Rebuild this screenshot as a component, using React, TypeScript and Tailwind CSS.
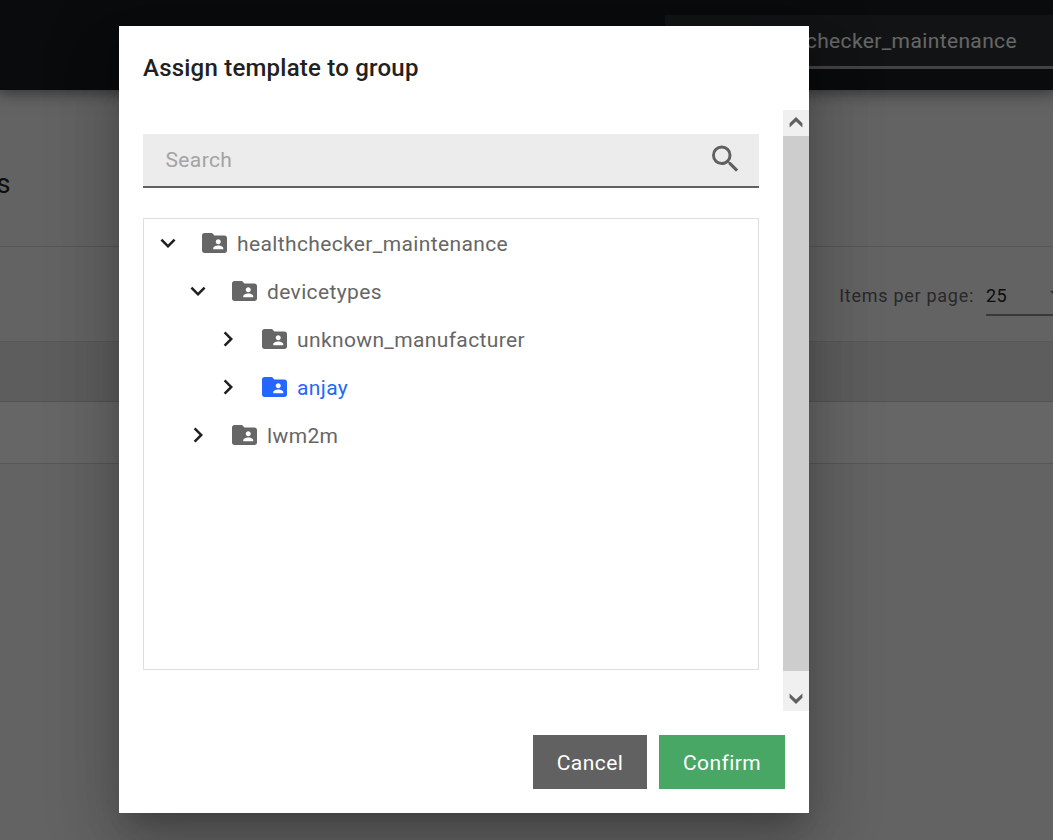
import { MdChevronRight, MdExpandMore, MdFolderShared, MdSearch } from "react-icons/md";

type Node = { label: string; indent: string; open: boolean; selected?: boolean };

const nodes: Node[] = [
  { label: "healthchecker_maintenance", indent: "pl-[9px]", open: true },
  { label: "devicetypes", indent: "pl-[39px]", open: true },
  { label: "unknown_manufacturer", indent: "pl-[69px]", open: false },
  { label: "anjay", indent: "pl-[69px]", open: false, selected: true },
  { label: "lwm2m", indent: "pl-[39px]", open: false },
];

function TreeRow({ node }: { node: Node }) {
  const Arrow = node.open ? MdExpandMore : MdChevronRight;
  return (
    <li className={`flex h-12 items-center ${node.indent} ${node.selected ? "text-[#2566ff]" : "text-[#666666]"}`}>
      <Arrow className="size-[30px] shrink-0 text-[#1f1f1f]" />
      <MdFolderShared className="ml-4 size-[30px] shrink-0 translate-x-[0.5px]" />
      <span className="ml-2 pt-px text-[21px] leading-6 tracking-[0.37px]">{node.label}</span>
    </li>
  );
}

function Page() {
  return (
    <div className="flex h-full flex-col bg-[#f7f7f7]">
      <header className="z-10 flex h-[90px] shrink-0 justify-end bg-[#191c20] pt-[15px] shadow-[0_0_15px_3px_rgba(0,0,0,0.5)]">
        <div className="flex h-[54px] w-[388px] justify-end border-b-3 border-[#a8a8a8] bg-[#2d3134] pr-9">
          <span className="pt-[14px] text-[21px] leading-6 tracking-[0.37px] text-white">healthchecker_maintenance</span>
        </div>
      </header>
      <div className="flex h-[157px] shrink-0 items-start overflow-hidden border-b border-[#d6d6d6] pt-[76px]">
        <h1 className="-ml-[114px] flex w-[124.5px] justify-end text-[27px] leading-9 text-[#212121]">Templates</h1>
      </div>
      <div className="flex h-[95px] shrink-0 justify-end border-b border-[#dcdcdc]">
        <div className="flex pt-[37px] text-[18px] leading-6">
          <span className="mr-[12px] tracking-[0.72px] text-[#686868]">Items per page:</span>
          <div className="flex h-[32px] w-[67px] justify-between border-b-2 border-[#8e8e8e] text-[#212121]">
            <span className="tracking-[0.5px]">25</span>
            <svg className="-mr-[11px] mt-[7px] h-[7px] w-[14px]" viewBox="0 0 14 7">
              <path d="M0 0h14L7 7z" fill="#757575" />
            </svg>
          </div>
        </div>
      </div>
      <div className="h-[60px] shrink-0 border-b border-[#d0d0d0] bg-[#e9e9e9]" />
      <div className="h-[62px] shrink-0 border-b border-[#dadada] bg-white" />
    </div>
  );
}

function Scrollbar() {
  return (
    <div className="flex h-full w-[26px] shrink-0 flex-col bg-[#f0f0f0]">
      <svg className="h-[26px] w-[26px]" viewBox="0 0 26 26">
        <path d="M13 7l6.4 6.2v4.3L13 11.6l-6.4 5.9v-4.3z" fill="#606060" />
      </svg>
      <div className="flex-1 bg-[#cdcdcd]" />
      <svg className="mt-[14px] h-[26px] w-[26px]" viewBox="0 0 26 26">
        <path d="M13 19l-6.4-6.2V8.5l6.4 5.9 6.4-5.9v4.3z" fill="#606060" />
      </svg>
    </div>
  );
}

export default function App() {
  return (
    <div className="relative h-[840px] w-[1053px] overflow-hidden font-[Roboto,sans-serif]">
      <Page />
      <div className="absolute inset-0 z-20 flex items-start bg-black/60 pt-[26px] pl-[119px]">
        <div
          role="dialog"
          className="flex h-[787px] w-[690px] flex-col bg-white shadow-[0_16.5px_22.5px_-10.5px_rgba(0,0,0,0.2),0_36px_57px_4.5px_rgba(0,0,0,0.14),0_13.5px_69px_12px_rgba(0,0,0,0.12)]"
        >
          <h2 className="h-[84px] shrink-0 pt-[26px] pl-6 text-[24px] leading-8 font-medium tracking-[0.22px] text-[#212121]">
            Assign template to group
          </h2>
          <div className="flex h-[601px] shrink-0 justify-between pl-6">
            <div className="flex w-[616px] flex-col pt-6">
              <label className="flex h-[54px] justify-between border-b-2 border-[#616161] bg-[#ececec] pr-4 pl-[22.5px]">
                <span className="pt-[14px] text-[21px] leading-6 tracking-[0.37px] text-[#a3a3a3]">Search</span>
                <MdSearch className="mt-[7px] size-9 translate-x-[0.5px] text-[#616161]" />
              </label>
              <ul className="mt-[30px] h-[452px] border border-[#dedede]">
                {nodes.map((n) => (
                  <TreeRow key={n.label} node={n} />
                ))}
              </ul>
            </div>
            <Scrollbar />
          </div>
          <div className="flex justify-end gap-3 pt-6 pr-6 text-[21px] tracking-[0.42px] text-white">
            <button className="h-[54px] w-[114px] bg-[#616161] pt-[3px]">Cancel</button>
            <button className="h-[54px] w-[126px] bg-[#48a764] pt-[3px]">Confirm</button>
          </div>
        </div>
      </div>
    </div>
  );
}
